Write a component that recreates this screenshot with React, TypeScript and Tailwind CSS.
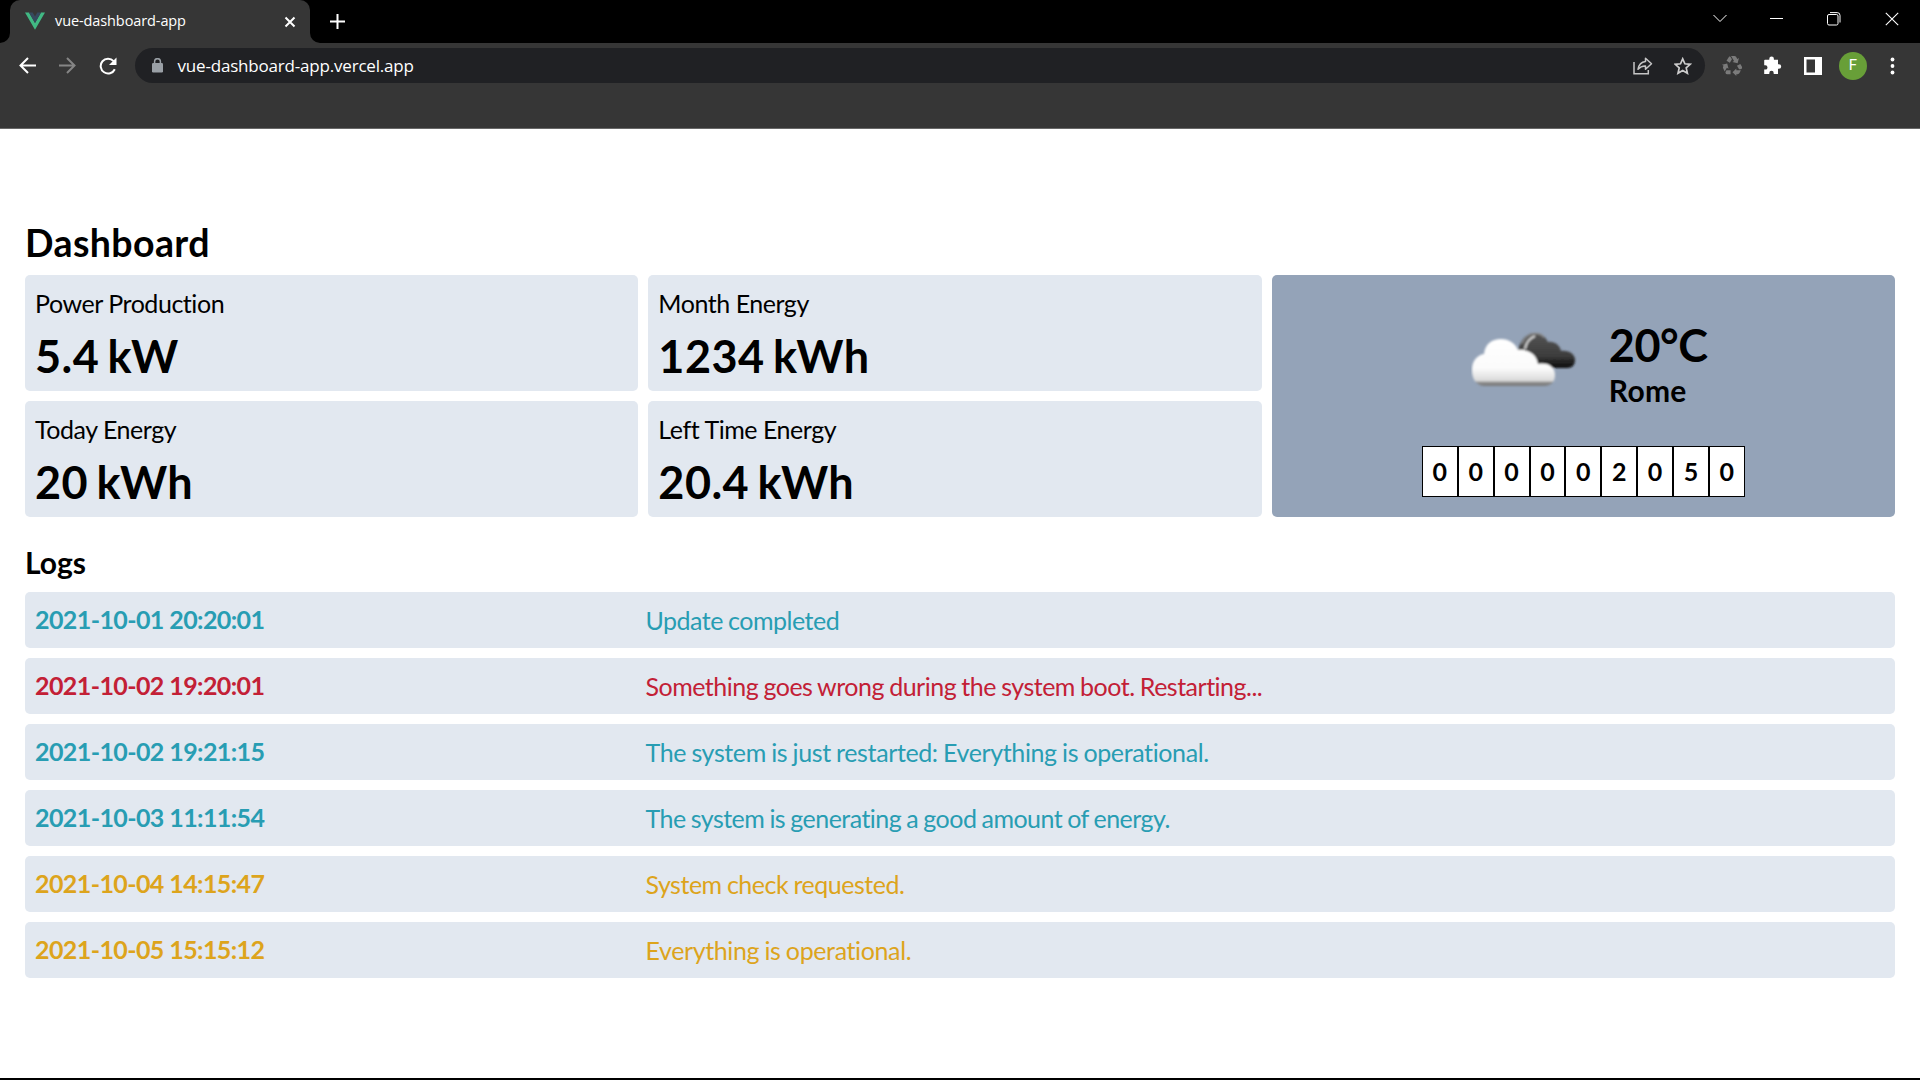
import type { ReactNode } from 'react';
import { MdRecycling } from 'react-icons/md';

const cards = [
  { label: 'Power Production', value: '5.4 kW' },
  { label: 'Month Energy', value: '1234 kWh' },
  { label: 'Today Energy', value: '20 kWh' },
  { label: 'Left Time Energy', value: '20.4 kWh' },
];

const logs = [
  { date: '2021-10-01 20:20:01', text: 'Update completed', color: 'text-[#289db3]', tracking: 'tracking-[-0.500px]' },
  { date: '2021-10-02 19:20:01', text: 'Something goes wrong during the system boot. Restarting...', color: 'text-[#c32036]', tracking: 'tracking-[-0.500px]' },
  { date: '2021-10-02 19:21:15', text: 'The system is just restarted: Everything is operational.', color: 'text-[#289db3]', tracking: 'tracking-[-0.380px]' },
  { date: '2021-10-03 11:11:54', text: 'The system is generating a good amount of energy.', color: 'text-[#289db3]', tracking: 'tracking-[-0.540px]' },
  { date: '2021-10-04 14:15:47', text: 'System check requested.', color: 'text-[#dda41c]', tracking: 'tracking-[-0.480px]' },
  { date: '2021-10-05 15:15:12', text: 'Everything is operational.', color: 'text-[#dda41c]', tracking: 'tracking-[-0.380px]' },
];

const digits = ['0', '0', '0', '0', '0', '2', '0', '5', '0'];

function Icon({ w, h, className = '', children }: { w: number; h: number; className?: string; children: ReactNode }) {
  return (
    <svg width={w} height={h} viewBox={`0 0 ${w} ${h}`} fill="none" className={`block shrink-0 ${className}`}>
      {children}
    </svg>
  );
}

function TabStrip() {
  return (
    <div className="flex h-[43px] items-stretch bg-black">
      <Icon w={10} h={43}>
        <path d="M0 43a10 10 0 0 0 10-10v10z" fill="#363636" />
      </Icon>
      <div className="flex w-[300px] items-center rounded-t-[10px] bg-[#363636] pl-[15px] pr-[14px]">
        <Icon w={20} h={18} className="mt-[-2px]">
          <path d="M0 0.5h4L10 11l6-10.500h4L10 17.800z" fill="#41b883" />
          <path d="M4 0.500h3.700L10 4.500l2.300-4H16L10 11z" fill="#35495e" />
        </Icon>
        <span className="ml-[10px] mt-[-2px] whitespace-nowrap font-['Open_Sans'] text-[14.5px] leading-5 tracking-[-0.100px] text-white">
          vue-dashboard-app
        </span>
        <Icon w={12} h={12} className="ml-auto">
          <path d="M1.500 1.500l9 9M10.500 1.500l-9 9" stroke="#fff" strokeWidth="2" />
        </Icon>
      </div>
      <Icon w={10} h={43}>
        <path d="M10 43A10 10 0 0 1 0 33v10z" fill="#363636" />
      </Icon>
      <div className="flex items-center pl-[10px]">
        <Icon w={15} h={15}>
          <path d="M7.500 0v15M0 7.500h15" stroke="#fff" strokeWidth="2" />
        </Icon>
      </div>
      <div className="ml-auto flex items-center pb-[6px] pr-[21px]">
        <Icon w={14} h={9} className="mr-[43px]">
          <path d="M0.500 1l6.500 6.500L13.500 1" stroke="#fff" />
        </Icon>
        <Icon w={13} h={13} className="mr-[44px]">
          <path d="M0 6.500h13" stroke="#fff" />
        </Icon>
        <Icon w={14} h={14} className="mr-[44px]">
          <rect x="0.500" y="2.500" width="10.500" height="10.500" rx="1.500" stroke="#fff" />
          <path d="M3 0.600h7.200a2.800 2.800 0 0 1 2.800 2.800V10.500" stroke="#fff" />
        </Icon>
        <Icon w={14} h={14}>
          <path d="M0.800 0.800l12.400 12.400M13.200 0.800L0.800 13.200" stroke="#fff" strokeWidth="1.100" />
        </Icon>
      </div>
    </div>
  );
}

function Toolbar() {
  return (
    <div className="flex h-[86px] items-start border-b border-[#686868] bg-[#363636] pl-[19px] pr-6 pt-[5px]">
      <div className="flex h-[35px] items-center">
        <Icon w={17} h={17} className="mr-[23px]">
          <path d="M17 8.500H2M9 1L1.500 8.500 9 16" stroke="#fff" strokeWidth="2" />
        </Icon>
        <Icon w={17} h={17} className="mr-[23px]">
          <path d="M0 8.500h15M8 1l7.500 7.500L8 16" stroke="#858585" strokeWidth="2" />
        </Icon>
        <Icon w={18} h={18}>
          <path d="M15.800 12.200A7.400 7.400 0 1 1 14.600 4.100" stroke="#fff" strokeWidth="2" />
          <path d="M17.500 0.500v7.500H10z" fill="#fff" />
        </Icon>
      </div>
      <div className="ml-[18px] flex h-[35px] w-[1570px] items-center rounded-full bg-[#202124] pl-[17px] pr-[13px]">
        <Icon w={11} h={15}>
          <rect y="5" width="11" height="9.500" rx="1.200" fill="#9aa0a6" />
          <path d="M2.600 6V3.600a2.900 2.900 0 0 1 5.800 0V6" stroke="#9aa0a6" strokeWidth="1.500" />
        </Icon>
        <span className="ml-[14.500px] whitespace-nowrap font-['Open_Sans'] text-[17px] leading-6 tracking-[-0.190px] text-white">vue-dashboard-app.vercel.app</span>
        <Icon w={20} h={18} className="ml-auto">
          <path d="M1 5v11.800h14.300V13" stroke="#c5c5c5" strokeWidth="1.500" />
          <path d="M12.500 1.200l6 5.600-6 5.400V9C9.400 8.800 7.300 9.700 5 12.300c0.700-4.300 3-7.200 7.500-7.800z" stroke="#c5c5c5" strokeWidth="1.500" strokeLinejoin="round" />
        </Icon>
        <Icon w={18} h={18} className="ml-[21px]">
          <path d="M8.700 1.800l2.200 5 5.300 0.500-4 3.600 1.200 5.300-4.700-2.800-4.700 2.800 1.200-5.300-4-3.600 5.300-0.500z" stroke="#ccc" strokeWidth="1.700" />
        </Icon>
      </div>
      <div className="ml-[16px] flex h-[35px] items-center">
        <MdRecycling size={23} className="block shrink-0 text-[#7b7b7b]" />
        <Icon w={19} h={19} className="ml-[19px]">
          <path d="M2 3.700h4.300V2.800a2.300 2.300 0 0 1 4.600 0v0.900H15v4.500h0.900a2.300 2.300 0 0 1 0 4.600H15V18h-4.300v-1.100a2.200 2.200 0 0 0-4.400 0V18H1.200v-4.400h1.100a2.200 2.200 0 0 0 0-4.400H1.200V4.500a0.800 0.800 0 0 1 0.800-0.800z" fill="#fff" />
        </Icon>
        <Icon w={18} h={18} className="ml-[22px]">
          <path d="M0 0h18v18H0z M2.500 2.500v13h8.500v-13z" fill="#fff" fillRule="evenodd" />
        </Icon>
        <div className="ml-[17px] flex size-7 items-center justify-center rounded-full bg-[#689f38] font-['Roboto'] text-[15px] text-white">F</div>
        <Icon w={5} h={18} className="ml-[23px]">
          <g fill="#fff">
            <circle cx="2.500" cy="2.500" r="1.900" />
            <circle cx="2.500" cy="9" r="1.900" />
            <circle cx="2.500" cy="15.500" r="1.900" />
          </g>
        </Icon>
      </div>
    </div>
  );
}

function Clouds() {
  return (
    <svg width="106" height="58" viewBox="0 0 106 58" className="block shrink-0">
      <defs>
        <linearGradient id="dark" x1="0" y1="0" x2="0" y2="1">
          <stop offset="0" stopColor="#555" />
          <stop offset="0.650" stopColor="#3d3d3d" />
          <stop offset="1" stopColor="#080808" />
        </linearGradient>
        <linearGradient id="light" x1="0" y1="0" x2="0" y2="1">
          <stop offset="0" stopColor="#fff" />
          <stop offset="0.620" stopColor="#fbfbfb" />
          <stop offset="0.890" stopColor="#d9d9d9" />
          <stop offset="0.920" stopColor="#8e8e8e" />
          <stop offset="1" stopColor="#777" />
        </linearGradient>
        <filter id="soft" x="-10%" y="-10%" width="120%" height="120%">
          <feGaussianBlur stdDeviation="1" />
        </filter>
      </defs>
      <g filter="url(#soft)">
        <path d="M47 19C50 8 56 2 64 2c6 0 10 3 13 9 6-1 12 3 13 9 8-1 14 3 14 9 0 5-3 8-8 8H66z" fill="url(#dark)" />
        <path d="M51 13C54 6 58 2.500 64 2.500c4 0 7 1 9 4" stroke="#8a8a8a" strokeWidth="1.500" fill="none" />
        <path d="M54 18c1-6 5-11 10-13" stroke="#d5d5d5" strokeWidth="2" fill="none" />
        <path d="M13 23C14 13 21 8 30 8c8 0 14 4 17 11 10-1 19 4 20 14 10-2 17 3 17 11 0 7-4 11-11 11H14C6 55 1 49 1 39c0-9 5-15 12-16z" fill="url(#light)" />
      </g>
    </svg>
  );
}

export default function App() {
  return (
    <div className="flex h-[1080px] w-[1920px] flex-col overflow-hidden border-b-2 border-black bg-white font-['Lato',sans-serif] text-black">
      <TabStrip />
      <Toolbar />
      <main className="px-[25px] pt-[91px]">
        <h1 className="h-[55px] text-[37.5px] font-bold leading-[46px] tracking-[0.400px]">Dashboard</h1>
        <section className="flex h-[242px]">
          <div className="grid w-2/3 grid-cols-2 gap-[10px] pr-[10px]">
            {cards.map((c) => (
              <div key={c.label} className="rounded-[5px] bg-[#e2e8f0] px-[10px] pt-[11px]">
                <div className="text-[25px] leading-[35px] tracking-[-0.460px]">{c.label}</div>
                <div className="mt-[10px] text-[45px] font-bold leading-[50px] tracking-[0.450px] [word-spacing:-3px]">{c.value}</div>
              </div>
            ))}
          </div>
          <div className="flex w-1/3 flex-col items-center rounded-[5px] bg-[#94a3b8] pt-[45px]">
            <div className="flex h-[126px] w-[225px]">
              <div className="pt-[11px]">
                <Clouds />
              </div>
              <div className="ml-[32px] whitespace-nowrap font-bold">
                <div className="text-[45px] leading-[50px] tracking-[-0.500px]">20°C</div>
                <div className="text-[30px] leading-[40px] tracking-[0.300px]">Rome</div>
              </div>
            </div>
            <div className="flex h-[51px] text-[25px] font-bold">
              {digits.map((d, i) => (
                <div key={i} className="flex w-[35.890px] items-center justify-center border border-black bg-white">
                  {d}
                </div>
              ))}
            </div>
          </div>
        </section>
        <h2 className="mt-[25px] h-[50px] text-[30px] font-bold leading-[40px]">Logs</h2>
        <div className="flex flex-col gap-[10px] text-[25px]">
          {logs.map((l) => (
            <div key={l.date} className={`flex h-14 items-center rounded-[5px] bg-[#e2e8f0] px-[10px] ${l.color}`}>
              <div className="w-[610.500px] font-bold tracking-[-0.590px]">{l.date}</div>
              <div className={`whitespace-nowrap pt-px [word-spacing:-0.700px] ${l.tracking}`}>{l.text}</div>
            </div>
          ))}
        </div>
      </main>
    </div>
  );
}
